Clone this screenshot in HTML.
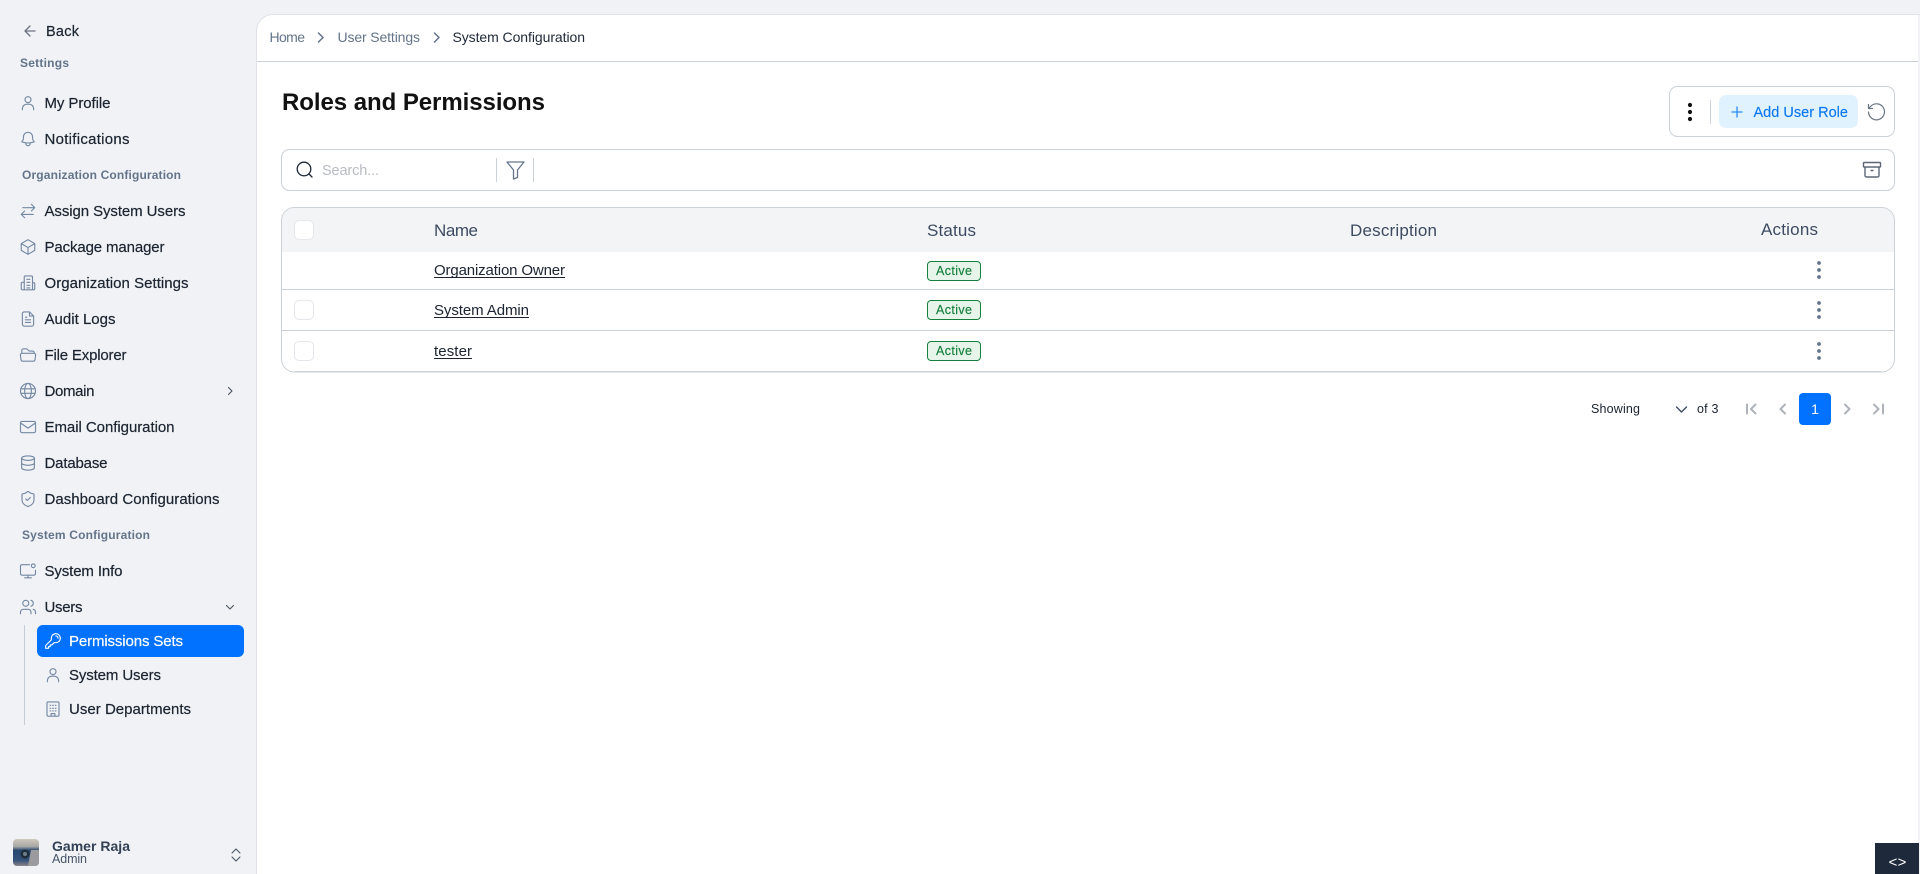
<!DOCTYPE html>
<html lang="en"><head><meta charset="utf-8"><title>Roles and Permissions</title>
<style>
html,body{margin:0;padding:0;width:1920px;height:874px;overflow:hidden;background:#f0f2f5}
svg{display:block}
text{font-family:"Liberation Sans",sans-serif;white-space:pre}
.n{font-size:15px;fill:#1b2430;stroke:#1b2430;stroke-width:.2px}
.h{font-size:12px;font-weight:700;fill:#64748b}
.b{font-size:14px;fill:#64748b}
.t{font-size:15px;fill:#1b2430}
.th{font-size:17px;fill:#3d4b61}
.a{font-size:12.5px;fill:#15803d;stroke:#15803d;stroke-width:.15px}
.p{font-size:12.5px;fill:#1b2430}
.i{fill:none;stroke:#7488a3;stroke-width:1.5;stroke-linecap:round;stroke-linejoin:round}
</style></head><body>
<svg width="1920" height="874" viewBox="0 0 1920 874" xmlns="http://www.w3.org/2000/svg">
<defs>
<symbol id="user" viewBox="0 0 24 24"><circle cx="12" cy="7.5" r="4"/><path d="M4.5 21v-1.5a6 6 0 0 1 6-6h3a6 6 0 0 1 6 6V21"/></symbol>
<symbol id="bell" viewBox="0 0 24 24"><path d="M14.857 17.082a23.848 23.848 0 0 0 5.454-1.31A8.967 8.967 0 0 1 18 9.75V9A6 6 0 0 0 6 9v.75a8.967 8.967 0 0 1-2.312 6.022c1.733.64 3.56 1.085 5.455 1.31m5.714 0a24.255 24.255 0 0 1-5.714 0m5.714 0a3 3 0 1 1-5.714 0"/></symbol>
<symbol id="swap" viewBox="0 0 24 24"><path d="M16.5 3 21 7.5m0 0L16.5 12M21 7.5H5M7.5 12 3 16.5m0 0L7.5 21M3 16.5h16"/></symbol>
<symbol id="cube" viewBox="0 0 24 24"><path d="M21 7.5l-9-5.25L3 7.5m18 0-9 5.25m9-5.25v9l-9 5.25M3 7.5l9 5.25M3 7.5v9l9 5.25m0-9v9"/></symbol>
<symbol id="org" viewBox="0 0 24 24"><path d="M7 21V4a1.5 1.5 0 0 1 1.5-1.5h8A1.5 1.5 0 0 1 18 4v17M7 11H4.500A1.500 1.500 0 0 0 3 12.500V19.500A1.500 1.500 0 0 0 4.500 21H19.500A1.500 1.500 0 0 0 21 19.500V13A1.500 1.500 0 0 0 19.500 11.500H18M10.500 7h4M10.500 11h4M10.500 15h4M10.500 18.500h4"/></symbol>
<symbol id="doc" viewBox="0 0 24 24"><path d="M14 2.500H7A2.500 2.500 0 0 0 4.500 5v14A2.500 2.500 0 0 0 7 21.500h10a2.500 2.500 0 0 0 2.500-2.500V8zM14 2.500V8h5.500M8.500 9.500h2M8.500 13h7M8.500 16.500h7"/></symbol>
<symbol id="folder" viewBox="0 0 24 24"><path d="M3.75 9.776c.112-.017.227-.026.344-.026h15.812c.117 0 .232.009.344.026m-16.5 0a2.25 2.25 0 0 0-1.883 2.542l.857 6a2.25 2.25 0 0 0 2.227 1.932H19.05a2.25 2.25 0 0 0 2.227-1.932l.857-6a2.25 2.25 0 0 0-1.883-2.542m-16.5 0V6A2.25 2.25 0 0 1 6 3.75h3.879a1.5 1.5 0 0 1 1.06.44l2.122 2.12a1.5 1.5 0 0 0 1.06.44H18A2.25 2.25 0 0 1 20.25 9v.776"/></symbol>
<symbol id="globe" viewBox="0 0 24 24"><circle cx="12" cy="12" r="10"/><ellipse cx="12" cy="12" rx="4.500" ry="10"/><path d="M2.500 9h19M2.500 15h19"/></symbol>
<symbol id="mail" viewBox="0 0 24 24"><rect x="2" y="4.500" width="20" height="15" rx="2"/><path d="M2.500 7 12 13.500 21.500 7"/></symbol>
<symbol id="db" viewBox="0 0 24 24"><ellipse cx="12" cy="5.500" rx="8.500" ry="3"/><path d="M3.500 5.500v13c0 1.660 3.800 3 8.500 3s8.500-1.340 8.500-3v-13M3.500 12c0 1.660 3.800 3 8.500 3s8.500-1.340 8.500-3"/></symbol>
<symbol id="shield" viewBox="0 0 24 24"><path d="M20 13c0 5-3.500 7.500-7.660 8.950a1 1 0 0 1-.67-.01C7.500 20.500 4 18 4 13V6a1 1 0 0 1 1-1c2 0 4.500-1.200 6.240-2.720a1.170 1.170 0 0 1 1.520 0C14.510 3.810 17 5 19 5a1 1 0 0 1 1 1z"/><path d="m9 12 2 2 4-4"/></symbol>
<symbol id="mon" viewBox="0 0 24 24"><path d="M14 3.500H4A2 2 0 0 0 2 5.500v10a2 2 0 0 0 2 2h16a2 2 0 0 0 2-2V11M12 17.500v3.500M7.500 21h9"/><circle cx="19" cy="5" r="2.500"/></symbol>
<symbol id="users" viewBox="0 0 24 24"><path d="M16 21v-2a4 4 0 0 0-4-4H6a4 4 0 0 0-4 4v2"/><circle cx="9" cy="7" r="4"/><path d="M22 21v-2a4 4 0 0 0-3-3.870M16 3.130a4 4 0 0 1 0 7.750"/></symbol>
<symbol id="key" viewBox="0 0 24 24"><path d="M15.750 5.250a3 3 0 0 1 3 3m3 0a6 6 0 0 1-7.029 5.912c-.563-.097-1.159.026-1.563.43L10.500 17.250H8.250v2.250H6v2.250H2.250v-2.818c0-.597.237-1.170.659-1.591l6.499-6.499c.404-.404.527-1 .43-1.563A6 6 0 1 1 21.750 8.250Z"/></symbol>
<symbol id="bld" viewBox="0 0 24 24"><rect x="4" y="2.500" width="16" height="19" rx="1.500"/><path d="M8 7h1M11.500 7h1M15 7h1M8 11h1M11.500 11h1M15 11h1M8 14.500h1M11.500 14.500h1M15 14.500h1M9.500 21.500V18h5v3.500"/></symbol>
</defs>

<!-- panel -->
<path d="M257 874V31a16 16 0 0 1 16-16H1920V874Z" fill="#fff"/>
<path d="M256.500 874V31a16.500 16.500 0 0 1 16.500-16.500H1920" fill="none" stroke="#dfe3e8"/>
<rect x="1918" y="15" width="2" height="859" fill="#f0f2f5"/>
<rect x="257" y="61" width="1661" height="1" fill="#cbd1d8"/>

<!-- sidebar -->
<path d="M35 31H25.500M30 26l-5 5 5 5" class="i" style="stroke:#6b7280;stroke-width:1.300"/>
<text x="46" y="36" class="n" textLength="33" style="font-size:14.500px">Back</text>
<text x="20" y="67" class="h" textLength="49">Settings</text>

<g class="i">
<use href="#user" x="19" y="94" width="18" height="18"/>
<use href="#bell" x="19" y="130" width="18" height="18"/>
<use href="#swap" x="19" y="202" width="18" height="18"/>
<use href="#cube" x="19" y="238" width="18" height="18"/>
<use href="#org" x="19" y="274" width="18" height="18"/>
<use href="#doc" x="19" y="310" width="18" height="18"/>
<use href="#folder" x="19" y="346" width="18" height="18"/>
<use href="#globe" x="19" y="382" width="18" height="18"/>
<use href="#mail" x="19" y="418" width="18" height="18"/>
<use href="#db" x="19" y="454" width="18" height="18"/>
<use href="#shield" x="19" y="490" width="18" height="18"/>
<use href="#mon" x="19" y="562" width="18" height="18"/>
<use href="#users" x="19" y="598" width="18" height="18"/>
<use href="#user" x="44" y="666" width="18" height="18"/>
<use href="#bld" x="44" y="700" width="18" height="18"/>
</g>

<text x="44.500" y="108" class="n" textLength="66">My Profile</text>
<text x="44.500" y="144" class="n" textLength="85">Notifications</text>
<text x="22" y="179" class="h" textLength="159">Organization Configuration</text>
<text x="44.500" y="216" class="n" textLength="141">Assign System Users</text>
<text x="44.500" y="252" class="n" textLength="120">Package manager</text>
<text x="44.500" y="288" class="n" textLength="144">Organization Settings</text>
<text x="44.500" y="324" class="n" textLength="71">Audit Logs</text>
<text x="44.500" y="360" class="n" textLength="82">File Explorer</text>
<text x="44.500" y="396" class="n" textLength="50">Domain</text>
<text x="44.500" y="432" class="n" textLength="130">Email Configuration</text>
<text x="44.500" y="468" class="n" textLength="63">Database</text>
<text x="44.500" y="504" class="n" textLength="175">Dashboard Configurations</text>
<text x="22" y="539" class="h" textLength="128">System Configuration</text>
<text x="44.500" y="576" class="n" textLength="78">System Info</text>
<text x="44.500" y="612" class="n" textLength="38">Users</text>

<path d="M228.500 387.500l3.500 3.500-3.500 3.500" class="i" style="stroke:#4b5563;stroke-width:1.100"/>
<path d="M226.500 605.500l3.500 3.500 3.500-3.500" class="i" style="stroke:#4b5563;stroke-width:1.100"/>

<rect x="24" y="625" width="1" height="100" fill="#c5ccd6"/>
<rect x="37" y="625" width="207" height="32" rx="6" fill="#0072ff"/>
<use href="#key" x="44" y="632" width="18" height="18" class="i" style="stroke:#fff"/>
<text x="69" y="646" class="n" textLength="114" style="fill:#fff;stroke:#fff">Permissions Sets</text>
<text x="69" y="680" class="n" textLength="92">System Users</text>
<text x="69" y="714" class="n" textLength="122">User Departments</text>

<!-- user footer -->
<defs><linearGradient id="av" x1="0" y1="0" x2="0" y2="1"><stop offset="0" stop-color="#cfc8bd"/><stop offset=".28" stop-color="#a9a8a4"/><stop offset=".42" stop-color="#26476f"/><stop offset=".78" stop-color="#34507a"/><stop offset="1" stop-color="#8a8488"/></linearGradient></defs>
<rect x="13" y="839" width="26" height="27" rx="4" fill="url(#av)"/>
<path d="M31 850H39V862a4 4 0 0 1-4 4H28Z" fill="#9b9a9c"/>
<circle cx="25" cy="854" r="4.500" fill="#1f2c3a"/>
<circle cx="25" cy="854" r="2" fill="#6e7e8c"/>
<text x="52" y="851" style="font-size:14px;font-weight:700;fill:#334155" textLength="78">Gamer Raja</text>
<text x="52" y="863" style="font-size:12.500px;fill:#475569" textLength="35">Admin</text>
<path d="M232 853l4-4 4 4M232 857l4 4 4-4" class="i" style="stroke:#4b5563;stroke-width:1.100"/>

<!-- breadcrumb -->
<text x="269.500" y="42" class="b" textLength="35.500">Home</text>
<path d="M318.500 33l4.500 4.500-4.500 4.500M434.500 33l4.500 4.500-4.500 4.500" fill="none" stroke="#64748b" stroke-width="1.500" stroke-linecap="round" stroke-linejoin="round"/>
<text x="337.500" y="42" class="b" textLength="82.500">User Settings</text>
<text x="452.500" y="42" class="b" textLength="132.500" style="fill:#1f2937">System Configuration</text>

<text x="282" y="110" textLength="263" style="font-size:24px;font-weight:700;fill:#111">Roles and Permissions</text>

<!-- actions toolbar -->
<rect x="1669.500" y="86.500" width="225" height="50" rx="8" fill="#fff" stroke="#cbd1d8"/>
<circle cx="1690" cy="105" r="2.100" fill="#111"/><circle cx="1690" cy="112" r="2.100" fill="#111"/><circle cx="1690" cy="119" r="2.100" fill="#111"/>
<rect x="1710" y="100" width="1" height="24" fill="#cbd1d8"/>
<rect x="1719" y="95" width="139" height="33" rx="7" fill="#e0f2fe"/>
<path d="M1732 112h10M1737 107v10" stroke="#2b8cf5" stroke-width="1.300" stroke-linecap="round" fill="none"/>
<text x="1753.500" y="117" textLength="94.500" style="font-size:14.500px;fill:#0b78f0;stroke:#0b78f0;stroke-width:.15px">Add User Role</text>
<path d="M1868.500 112a8 8 0 1 0 2.500-6l-2.500 2.400M1868.500 104.500v4h4" fill="none" stroke="#6b7683" stroke-width="1.200" stroke-linecap="round" stroke-linejoin="round"/>

<!-- search bar -->
<rect x="281.500" y="149.500" width="1613" height="41" rx="8" fill="#fff" stroke="#cbd1d8"/>
<circle cx="304" cy="169" r="6.800" fill="none" stroke="#1f2937" stroke-width="1.300"/>
<path d="M309 174l3 3" stroke="#1f2937" stroke-width="1.300" stroke-linecap="round"/>
<text x="322" y="175" textLength="57" style="font-size:14.500px;fill:#b8bcc2">Search...</text>
<rect x="496" y="158" width="1" height="24" fill="#cbd1d8"/>
<path d="M507 162h17l-6.500 8v7.500l-4 1.500v-9z" fill="none" stroke="#64748b" stroke-width="1.300" stroke-linejoin="round"/>
<rect x="533" y="158" width="1" height="24" fill="#cbd1d8"/>
<g fill="none" stroke="#5a6675" stroke-width="1.400" stroke-linejoin="round">
<rect x="1863.500" y="162.500" width="17" height="4.500" rx=".8"/>
<path d="M1865 167v8.500a1.500 1.500 0 0 0 1.500 1.500h11a1.500 1.500 0 0 0 1.500-1.500V167M1870.500 170.500h3"/>
</g>

<!-- table -->
<path d="M282 252V221a13 13 0 0 1 13-13H1881a13 13 0 0 1 13 13V252Z" fill="#f3f4f6"/>
<rect x="281.500" y="207.500" width="1613" height="164.500" rx="13" fill="none" stroke="#cbd1d8"/>
<rect x="295" y="371" width="1586" height="1.500" fill="#cbd1d8"/>
<rect x="282" y="289" width="1612" height="1" fill="#cbd1d8"/>
<rect x="282" y="330" width="1612" height="1" fill="#cbd1d8"/>
<g fill="#fff" stroke="#e3e6ea">
<rect x="294.500" y="220.500" width="19" height="19" rx="4.500"/>
<rect x="294.500" y="300.500" width="19" height="19" rx="4.500"/>
<rect x="294.500" y="341.500" width="19" height="19" rx="4.500"/>
</g>
<text x="434" y="236" class="th" textLength="44">Name</text>
<text x="927" y="236" class="th" textLength="49">Status</text>
<text x="1350" y="236" class="th" textLength="87">Description</text>
<text x="1761" y="235" class="th" textLength="57">Actions</text>

<text x="434" y="275" class="t" textLength="131">Organization Owner</text>
<rect x="434" y="277" width="131" height="1" fill="#1b2430"/>
<text x="434" y="315" class="t" textLength="95">System Admin</text>
<rect x="434" y="317" width="95" height="1" fill="#1b2430"/>
<text x="434" y="356" class="t" textLength="38">tester</text>
<rect x="434" y="358" width="38" height="1" fill="#1b2430"/>

<g fill="#e6f4ea" stroke="#15803d">
<rect x="927.500" y="261.500" width="53" height="19" rx="3.500"/>
<rect x="927.500" y="300.500" width="53" height="19" rx="3.500"/>
<rect x="927.500" y="341.500" width="53" height="19" rx="3.500"/>
</g>
<text x="936" y="275" class="a" textLength="36">Active</text>
<text x="936" y="314" class="a" textLength="36">Active</text>
<text x="936" y="355" class="a" textLength="36">Active</text>

<g fill="#64748b">
<circle cx="1819" cy="263" r="1.900"/><circle cx="1819" cy="270" r="1.900"/><circle cx="1819" cy="277" r="1.900"/>
<circle cx="1819" cy="303" r="1.900"/><circle cx="1819" cy="310" r="1.900"/><circle cx="1819" cy="317" r="1.900"/>
<circle cx="1819" cy="344" r="1.900"/><circle cx="1819" cy="351" r="1.900"/><circle cx="1819" cy="358" r="1.900"/>
</g>

<!-- pagination -->
<text x="1591" y="413" class="p" textLength="49">Showing</text>
<path d="M1676.500 407l5 5 5-5" fill="none" stroke="#3d4b61" stroke-width="1.400" stroke-linecap="round" stroke-linejoin="round"/>
<text x="1697" y="413" class="p" textLength="21.500">of 3</text>
<g fill="none" stroke="#aeb3b9" stroke-width="2" stroke-linecap="round" stroke-linejoin="round">
<path d="M1747 404.500v9M1755.500 404.500l-4.500 4.500 4.500 4.500"/>
<path d="M1785 404.500l-4.500 4.500 4.500 4.500"/>
<path d="M1845 404.500l4.500 4.500-4.500 4.500"/>
<path d="M1874 404.500l4.500 4.500-4.500 4.500M1883 404.500v9"/>
</g>
<rect x="1799" y="393" width="32" height="32" rx="4" fill="#0072ff"/>
<text x="1815" y="414" text-anchor="middle" style="font-size:14px;fill:#fff">1</text>

<!-- dev button -->
<rect x="1875" y="843" width="44" height="31" fill="#1e293b"/>
<text x="1897.500" y="867" text-anchor="middle" style="font-family:'Liberation Mono',monospace;font-size:15px;fill:#fff">&lt;&gt;</text>
</svg>
</body></html>
